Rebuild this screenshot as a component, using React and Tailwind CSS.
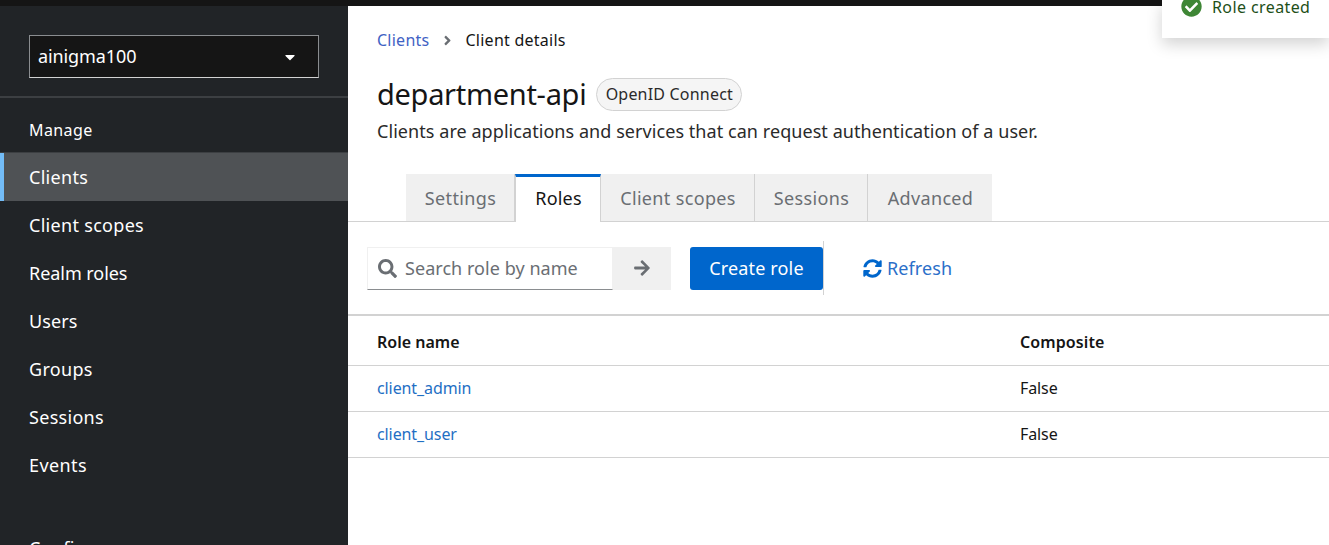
import React from "react";
import { FaSearch, FaArrowRight, FaSyncAlt, FaCheckCircle, FaCaretDown, FaAngleRight } from "react-icons/fa";

const font = { fontFamily: '"Noto Sans", "Liberation Sans", sans-serif' };
const nav = [
  ["Client scopes", "tracking-[0.3px]"],
  ["Realm roles", "tracking-[-0.05px]"],
  ["Users", "tracking-[0.1px]"],
  ["Groups", "tracking-[0.3px]"],
  ["Sessions", "tracking-[0.3px]"],
  ["Events", "tracking-[0.4px]"],
];

function Tab({ label, active, w, last }) {
  return active ? (
    <div className={`${w} h-[48px] -mb-px relative z-10 bg-white border-x border-[#d2d2d2] border-t-[3px] border-t-[#06c] flex items-center justify-center pb-[3px] pl-[1px] text-[18px] tracking-[0.2px] text-[#151515]`}>{label}</div>
  ) : (
    <div className={`${w} h-[47px] bg-[#f0f0f0] ${last ? "" : "border-r border-[#d2d2d2]"} flex items-center justify-center pt-px pl-[1px] text-[18px] tracking-[0.35px] text-[#6a6e73]`}>{label}</div>
  );
}

function Row({ name }) {
  return (
    <div className="flex h-[46px] items-center pb-[2px] border-b border-[#d2d2d2] text-[16px] tracking-[-0.1px]">
      <div className="w-[672px] pl-[29px] text-[#1f6fc4]">{name}</div>
      <div className="text-[#151515]">False</div>
    </div>
  );
}

export default function App() {
  return (
    <div style={font} className="relative h-[545px] w-full overflow-hidden bg-white flex flex-col">
      <div className="h-[6px] shrink-0 bg-[#151515]" />
      <div className="flex flex-1 min-h-0">
        <aside className="w-[348px] shrink-0 bg-[#212427] text-white overflow-hidden">
          <div className="h-[92px] pt-[29px] px-[29px] border-b-2 border-[#3c3f42]">
            <div className="h-[43px] flex items-center justify-between pl-[8px] pr-[20px] bg-[#151515] border border-t-[#8a8d90] border-x-[#8a8d90] border-b-[#d2d2d2] text-[18px] tracking-[-0.1px]">
              <span>ainigma100</span>
              <FaCaretDown className="text-white w-[16px] h-[16px]" />
            </div>
          </div>
          <div className="h-[55px] pl-[29px] pt-[21px] text-[16px] leading-[22px] tracking-[0.4px] border-b border-[#3c3f42]">Manage</div>
          <div className="h-[48px] flex items-center pl-[25px] bg-[#4f5255] border-l-4 border-[#73bcf7] text-[18px] tracking-[0.3px]">Clients</div>
          {nav.map(([n, t]) => (
            <div key={n} className={`h-[48px] flex items-center pl-[29px] text-[18px] ${t}`}>{n}</div>
          ))}
          <div className="pl-[29px] pt-[46px] text-[18px] tracking-[0.3px]">Configure</div>
        </aside>

        <main className="flex-1 min-w-0">
          <div className="h-[168px] pl-[29px] pt-[22px]">
            <div className="flex items-center h-[24px] text-[16px] tracking-[0.25px]">
              <span className="text-[#3f62c4]">Clients</span>
              <FaAngleRight className="w-[15px] h-[15px] ml-[11px] mr-[10px] text-[#6a6e73]" />
              <span className="text-[#151515]">Client details</span>
            </div>
            <div className="flex items-center mt-[26px] h-[33px]">
              <h1 className="-mt-[2px] text-[29px] text-[#151515] tracking-[-0.3px]">department-api</h1>
              <span className="ml-[10px] h-[33px] w-[146px] pb-[2px] flex items-center justify-center rounded-full border border-[#d2d2d2] bg-[#f5f5f5] text-[16px] text-[#2a2a2a] tracking-[0.2px]">OpenID Connect</span>
            </div>
            <p className="mt-[7px] text-[18px] leading-[26px] text-[#2a2a2a] tracking-[0.06px]">Clients are applications and services that can request authentication of a user.</p>
          </div>

          <div className="flex h-[48px] pl-[58px] border-b border-[#d2d2d2]">
            <Tab label="Settings" w="w-[109px]" />
            <Tab label="Roles" w="w-[86px]" active />
            <Tab label="Client scopes" w="w-[154px]" />
            <Tab label="Sessions" w="w-[113px]" />
            <Tab label="Advanced" w="w-[124px]" last />
          </div>

          <div className="h-[92px] flex items-center pl-[19px]">
            <div className="h-[43px] w-[246px] flex items-center border border-[#f0f0f0] border-b-[#8a8d90] bg-white pl-[10px]">
              <FaSearch className="w-[19px] h-[19px] text-[#6a6e73]" />
              <span className="ml-[8px] text-[18px] text-[#6a6e73] tracking-[0.05px]">Search role by name</span>
            </div>
            <div className="h-[43px] w-[58px] flex items-center justify-center bg-[#f0f0f0]">
              <FaArrowRight className="w-[18px] h-[18px] text-[#6a6e73]" />
            </div>
            <div className="ml-[19px] h-[43px] w-[133px] rounded-[3px] bg-[#06c] text-white flex items-center justify-center text-[18px] tracking-[0.15px]">Create role</div>
            <div className="h-[54px] w-px bg-[#d2d2d2]" />
            <div className="ml-[39px] flex items-center text-[18px] text-[#06c]">
              <FaSyncAlt className="w-[19px] h-[19px] mr-[5px]" />
              <span className="text-[#2b6fc9] tracking-[0.1px]">Refresh</span>
            </div>
          </div>

          <div className="border-t-2 border-[#d2d2d2]">
            <div className="flex h-[50px] items-center pt-[2px] border-b border-[#d2d2d2] text-[16px] font-semibold text-[#151515]">
              <div className="w-[672px] pl-[29px]">Role name</div>
              <div className="tracking-[0.1px]">Composite</div>
            </div>
            <Row name="client_admin" />
            <Row name="client_user" />
          </div>
        </main>
      </div>

      <div className="absolute top-0 left-[1162px] right-0 h-[38px] bg-white shadow-[0_6px_16px_rgba(0,0,0,0.18)] flex items-start pl-[19px] text-[16px] text-[#1e4f18]">
        <FaCheckCircle className="w-[21px] h-[21px] -mt-[4px] text-[#3e8635]" />
        <span className="ml-[10px] -mt-[5px] leading-[24px] tracking-[0.4px]">Role created</span>
      </div>
    </div>
  );
}
